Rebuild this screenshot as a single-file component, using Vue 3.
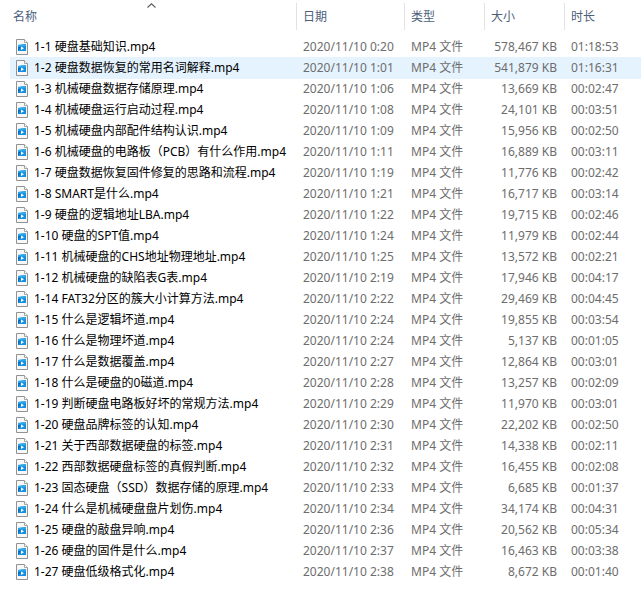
<script setup>
import { ref } from 'vue'

const columns = [
  { key: 'name', label: '名称' },
  { key: 'date', label: '日期' },
  { key: 'type', label: '类型' },
  { key: 'size', label: '大小' },
  { key: 'time', label: '时长' },
]

const files = [
  ['1-1 硬盘基础知识.mp4', '0:20', '578,467', '01:18:53'],
  ['1-2 硬盘数据恢复的常用名词解释.mp4', '1:01', '541,879', '01:16:31'],
  ['1-3 机械硬盘数据存储原理.mp4', '1:06', '13,669', '00:02:47'],
  ['1-4 机械硬盘运行启动过程.mp4', '1:08', '24,101', '00:03:51'],
  ['1-5 机械硬盘内部配件结构认识.mp4', '1:09', '15,956', '00:02:50'],
  ['1-6 机械硬盘的电路板（PCB）有什么作用.mp4', '1:11', '16,889', '00:03:11'],
  ['1-7 硬盘数据恢复固件修复的思路和流程.mp4', '1:19', '11,776', '00:02:42'],
  ['1-8 SMART是什么.mp4', '1:21', '16,717', '00:03:14'],
  ['1-9 硬盘的逻辑地址LBA.mp4', '1:22', '19,715', '00:02:46'],
  ['1-10 硬盘的SPT值.mp4', '1:24', '11,979', '00:02:44'],
  ['1-11 机械硬盘的CHS地址物理地址.mp4', '1:25', '13,572', '00:02:21'],
  ['1-12 机械硬盘的缺陷表G表.mp4', '2:19', '17,946', '00:04:17'],
  ['1-14 FAT32分区的簇大小计算方法.mp4', '2:22', '29,469', '00:04:45'],
  ['1-15 什么是逻辑坏道.mp4', '2:24', '19,855', '00:03:54'],
  ['1-16 什么是物理坏道.mp4', '2:24', '5,137', '00:01:05'],
  ['1-17 什么是数据覆盖.mp4', '2:27', '12,864', '00:03:01'],
  ['1-18 什么是硬盘的0磁道.mp4', '2:28', '13,257', '00:02:09'],
  ['1-19 判断硬盘电路板好坏的常规方法.mp4', '2:29', '11,970', '00:03:01'],
  ['1-20 硬盘品牌标签的认知.mp4', '2:30', '22,202', '00:02:50'],
  ['1-21 关于西部数据硬盘的标签.mp4', '2:31', '14,338', '00:02:11'],
  ['1-22 西部数据硬盘标签的真假判断.mp4', '2:32', '16,455', '00:02:08'],
  ['1-23 固态硬盘（SSD）数据存储的原理.mp4', '2:33', '6,685', '00:01:37'],
  ['1-24 什么是机械硬盘盘片划伤.mp4', '2:34', '34,174', '00:04:31'],
  ['1-25 硬盘的敲盘异响.mp4', '2:36', '20,562', '00:05:34'],
  ['1-26 硬盘的固件是什么.mp4', '2:37', '16,463', '00:03:38'],
  ['1-27 硬盘低级格式化.mp4', '2:38', '8,672', '00:01:40'],
]

const selected = ref(1)
</script>

<template>
  <main class="explorer">
    <table class="files">
      <colgroup>
        <col v-for="c in columns" :key="c.key" :class="'col-' + c.key" />
      </colgroup>
      <thead>
        <tr>
          <th v-for="c in columns" :key="c.key" scope="col" :aria-sort="c.key === 'name' ? 'ascending' : undefined">
            <button type="button" class="head">
              {{ c.label }}
              <svg v-if="c.key === 'name'" class="caret" width="9" height="5" viewBox="0 0 9 5" aria-hidden="true">
                <path d="M0.5 4.5 L4.5 0.8 L8.5 4.5" fill="none" stroke="#5c5c5c" stroke-width="1.1" />
              </svg>
            </button>
          </th>
        </tr>
      </thead>
      <tbody>
        <tr v-for="(f, i) in files" :key="f[0]" :class="{ selected: i === selected }" @click="selected = i">
          <td class="name">
            <div class="file">
              <svg class="icon" width="12" height="16" viewBox="0 0 12 16" aria-hidden="true">
                <path d="M0.5 0.5 H8.5 L11.5 3.5 V15.5 H0.5 Z" fill="#f8f8f8" stroke="#929292" />
                <path d="M8.5 0.5 V3.5 H11.5" fill="#fff" stroke="#a4a4a4" />
                <path d="M2 6 L10 5 V12 H2 Z" fill="#1590e0" />
                <path d="M2 6 L10 5 V7 L2 8 Z" fill="#2fa8ea" />
                <path d="M2 8 L5 7.6 L2 12 Z" fill="#0f6cbc" />
                <path d="M5 7.5 V11 L8 9.2 Z" fill="#fff" />
              </svg>
              <span>{{ f[0] }}</span>
            </div>
          </td>
          <td>2020/11/10 {{ f[1] }}</td>
          <td>MP4 文件</td>
          <td class="size">{{ f[2] }} KB</td>
          <td>{{ f[3] }}</td>
        </tr>
      </tbody>
    </table>
  </main>
</template>

<style>
body {
  background: #fff;
}
</style>

<style scoped>
.explorer {
  padding: 3px 3px 20px 10px;
  font-family: "Noto Sans", "Noto Sans CJK SC", sans-serif;
  font-size: 12px;
  line-height: 20px;
  color: #6d6d6d;
}
.files {
  width: 100%;
  table-layout: fixed;
  border-collapse: collapse;
}
.col-date {
  width: 108px;
}
.col-type,
.col-size {
  width: 80px;
}
.col-time {
  width: 76px;
}
th {
  height: 33px;
  padding: 0;
  vertical-align: top;
  font-weight: normal;
}
.head {
  display: block;
  position: relative;
  width: 100%;
  height: 27px;
  padding: 0 6px;
  border: 0;
  border-right: 1px solid #e2e2e2;
  background: none;
  font: inherit;
  color: #4c607a;
  text-align: left;
}
th:first-child .head {
  padding-left: 3px;
}
th:last-child .head {
  border-right: 0;
}
.caret {
  position: absolute;
  top: 0;
  left: 50%;
  margin-left: -6px;
}
td {
  height: 21px;
  padding: 0 6px;
  white-space: nowrap;
}
.name {
  padding: 0 0 0 6px;
  color: #000;
}
.file {
  display: flex;
  align-items: center;
  gap: 6px;
}
.icon {
  flex: none;
}
.size {
  padding-right: 8px;
  text-align: right;
}
.selected {
  background: #e5f3ff;
  box-shadow: 0 1px #e5f3ff;
}
</style>
